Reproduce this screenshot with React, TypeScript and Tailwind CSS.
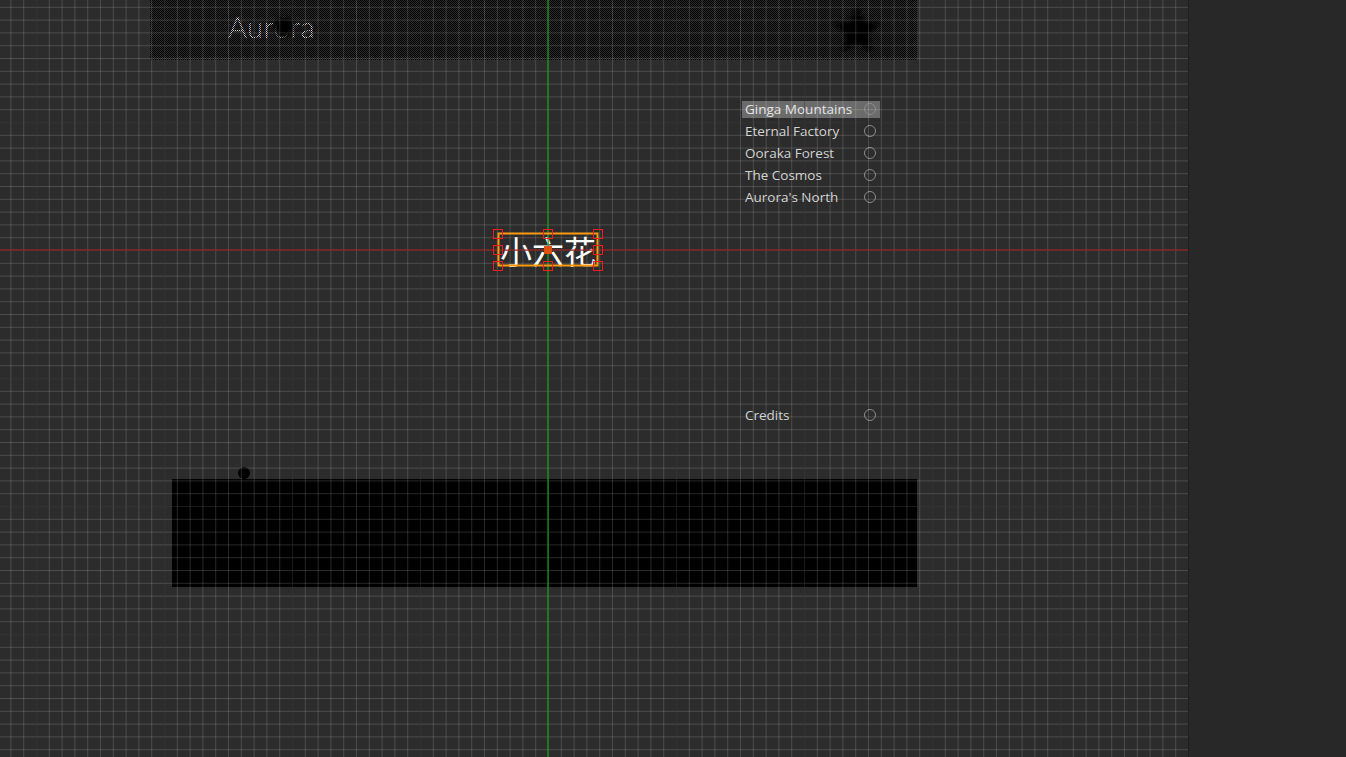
import React from "react";

const menu = ["Ginga Mountains", "Eternal Factory", "Ooraka Forest", "The Cosmos", "Aurora's North"];

function Radio() {
  return (
    <svg width="14" height="14" viewBox="0 0 14 14" className="shrink-0">
      <circle cx="7" cy="7" r="5.5" fill="none" stroke="#8a8a8a" strokeWidth="1" />
    </svg>
  );
}

function Handle({ x, y }: { x: number; y: number }) {
  return (
    <div
      className="absolute w-[10px] h-[10px] border-[1.5px] border-[#ff1a1a]"
      style={{ left: x - 5, top: y - 5 }}
    />
  );
}

export default function App() {
  const hx = [498, 548, 598];
  const hy = [234, 250, 266];
  return (
    <div className="flex w-[1346px] h-[757px] overflow-hidden bg-[#282828]" style={{ fontFamily: "'Open Sans', 'Noto Sans', sans-serif" }}>
      <div className="relative w-[1189px] h-full bg-[#2c2c2c] overflow-hidden border-r border-[#1e1e1e]">
        {/* top dithered panel */}
        <div className="absolute left-[150px] top-0 w-[767px] h-[60px]">
          <div className="absolute left-[78px] top-[5px] text-[29px] font-light text-[#d6d6d6] tracking-[0.5px]" style={{ fontFamily: "Lato, 'Open Sans', sans-serif" }}>
            Aurora
          </div>
          <div className="absolute left-[124px] top-[17px] w-[20px] h-[20px] rounded-full bg-black blur-[2px]" />
          <svg className="absolute left-[676px] top-[0px]" width="62" height="60" viewBox="0 0 62 60">
            <defs>
              <filter id="sb" x="-20%" y="-20%" width="140%" height="140%">
                <feGaussianBlur stdDeviation="2.5" />
              </filter>
            </defs>
            <polygon
              points="31,4 38.5,21 56,22.5 42.5,35 47,54 31,44 15,54 19.5,35 6,22.5 23.5,21"
              fill="#000"
              filter="url(#sb)"
            />
          </svg>
          <svg className="absolute inset-0" width="767" height="60">
            <defs>
              <pattern id="chk" width="2" height="2" patternUnits="userSpaceOnUse">
                <rect x="0" y="0" width="1" height="1" fill="#000" />
                <rect x="1" y="1" width="1" height="1" fill="#000" />
              </pattern>
            </defs>
            <rect width="767" height="60" fill="url(#chk)" />
          </svg>
        </div>

        {/* menu */}
        <div className="absolute left-[742px] top-[98px] w-[138px] flex flex-col text-[13.5px] text-[#d2d2d2]">
          {menu.map((m, i) => (
            <div key={m} className="flex items-center h-[22px]">
              <div className={`flex flex-1 items-center justify-between h-[17px] px-[3px] ${i === 0 ? "bg-[#6b6b6b] text-[#e4e4e4]" : ""}`}>
                <span className="leading-[17px]">{m}</span>
                <Radio />
              </div>
            </div>
          ))}
        </div>
        <div className="absolute left-[742px] top-[404px] w-[138px] flex items-center justify-between h-[22px] px-[3px] text-[13.5px] text-[#d2d2d2]">
          <span>Credits</span>
          <Radio />
        </div>

        {/* bottom black panel */}
        <div className="absolute left-[172px] top-[479px] w-[745px] h-[108px] bg-black" />
        <div className="absolute left-[238px] top-[467px] w-[12px] h-[12px] rounded-full bg-black" />

        {/* selected label */}
        <div
          className="absolute left-[498px] top-[233px] w-[100px] h-[33px] flex items-center justify-center text-[32px] text-white leading-none"
          style={{ fontFamily: "'Noto Sans CJK SC', 'Noto Sans', sans-serif" }}
        >
          小六花
        </div>

        {/* grid overlay */}
        <svg className="absolute inset-0 pointer-events-none" width="1189" height="757">
          <defs>
            <pattern id="minor" x="548" y="250" width="12.8" height="12.8" patternUnits="userSpaceOnUse">
              <rect x="0" y="0" width="1" height="12.8" fill="rgba(255,255,255,0.15)" />
              <rect x="0" y="0" width="12.8" height="1" fill="rgba(255,255,255,0.15)" />
            </pattern>
            <pattern id="major" x="548" y="250" width="128" height="128" patternUnits="userSpaceOnUse">
              <rect x="0" y="0" width="1" height="128" fill="rgba(0,0,0,0.35)" />
              <rect x="0" y="0" width="128" height="1" fill="rgba(0,0,0,0.35)" />
            </pattern>
          </defs>
          <rect width="1189" height="757" fill="url(#minor)" />
          <rect width="1189" height="757" fill="url(#major)" />
          <rect x="0" y="249.5" width="1189" height="1" fill="#b02020" />
          <rect x="547.5" y="0" width="1" height="757" fill="#10c010" />
          {/* selection rect */}
          <rect x="498.5" y="233.5" width="99" height="32" fill="none" stroke="#ff9a10" strokeWidth="2" />
          <rect x="544" y="246" width="8" height="8" fill="#e05010" />
        </svg>

        {hx.map((x) =>
          hy.map((y) => (x === 548 && y === 250 ? null : <Handle key={`${x}-${y}`} x={x} y={y} />))
        )}
      </div>
      <div className="flex-1 bg-[#282828]" />
    </div>
  );
}
